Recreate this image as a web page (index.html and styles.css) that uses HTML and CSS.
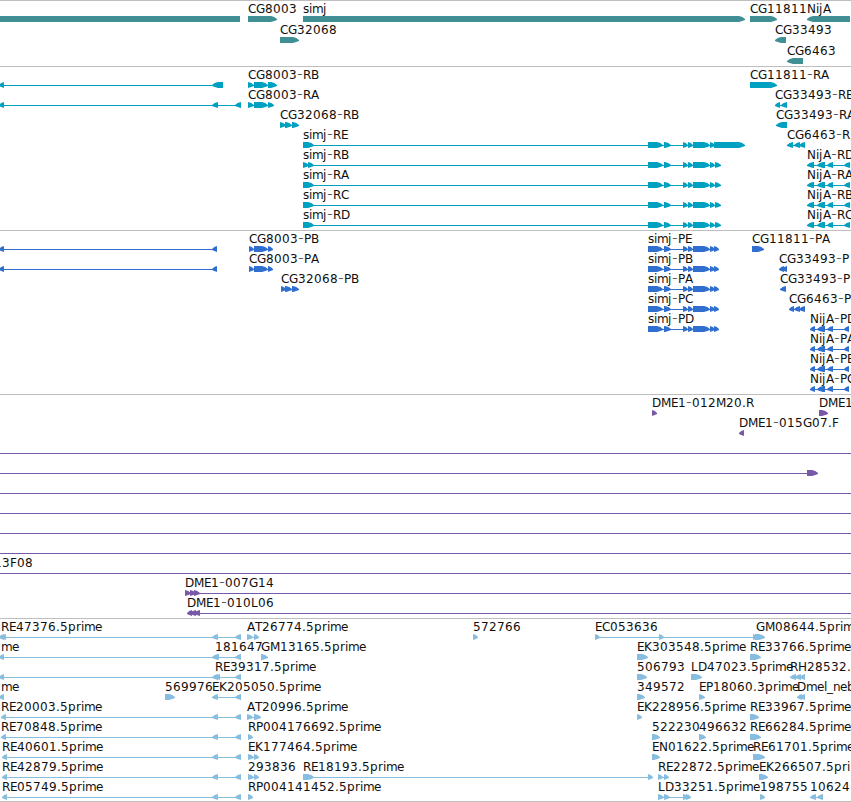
FILE: index.html
```html
<!DOCTYPE html>
<html lang="en">
<head>
  <meta charset="UTF-8">
  <title>Genome Tracks</title>
  <link rel="stylesheet" href="styles.css">
</head>
<body>

<main class="browser">
  <section class="track genes" id="genes"></section>
  <section class="track transcripts" id="transcripts"></section>
  <section class="track proteins" id="proteins"></section>
  <section class="track clones" id="clones"></section>
  <section class="track ests" id="ests"></section>
</main>

<script src="tracks.js"></script>
</body>
</html>
```

FILE: styles.css
```css
body { margin: 0; background-color: #ffffff; overflow: hidden; }
.browser { display: flex; flex-direction: column; width: 851px; height: 802px; overflow: hidden; }
.track { border-top: 1px solid #bebebe; padding-bottom: 3px; }
.row { display: block; width: 851px; height: 20px; overflow: visible; fill: currentColor; }
.row text { font-family: "DejaVu Sans", sans-serif; font-size: 12px; fill: #101010; }
.row .dash { font-family: "DejaVu Sans Light", "DejaVu Sans", sans-serif; font-weight: 200; font-size: 16px; }
.genes { color: #408f95; padding-bottom: 2px; }
.genes .row { height: 21px; }
.transcripts { color: #00a0c0; }
.proteins { color: #306fcf; }
.clones { color: #7858a8; }
.ests { color: #87bddf; border-bottom: 1px solid #bebebe; padding-bottom: 2px; }
```

FILE: tracks.js
```js
// Each feature: [label, label x, direction, exons, line]
// direction: 1 = forward, -1 = reverse, 0 = no arrow
const simjExons = [[648, 663], [664, 671], [683, 688], [688, 693], [693, 710], [710, 715]];
const nijR = [[807, 814], [817, 825], [827, 833], [844, 850]];
const nijP = [[810, 815], [817, 825], [827, 833], [844, 849]];

function simjR(name, first) {
  return ['simj-' + name, 303, 1, first.concat(simjExons, [[715, 721]])];
}
function simjP(name) {
  return ['simj-' + name, 648, 1, simjExons.concat([[714, 719]])];
}
function est(name, x, exons) {
  return [name, x, -1, exons.concat([[235, 241]])];
}

const tracks = {
  genes: [
    [
      ['', 0, 0, [[0, 240]]],
      ['CG8003', 248, 1, [[248, 277]]],
      ['simj', 303, 1, [[303, 745]]],
      ['CG11811', 750, 1, [[750, 777]]],
      ['NijA', 807, -1, [[807, 850]]]
    ],
    [['CG32068', 280, 1, [[280, 299]]], ['CG33493', 775, -1, [[775, 786]]]],
    [['CG6463', 787, -1, [[787, 803]]]]
  ],
  transcripts: [
    [
      ['', 0, -1, [[-1, 4], [212, 223]]],
      ['CG8003-RB', 248, 1, [[248, 254], [254, 268], [268, 277]]],
      ['CG11811-RA', 750, 1, [[750, 777]]]
    ],
    [
      ['', 0, -1, [[-1, 4], [212, 218], [235, 241]]],
      ['CG8003-RA', 248, 1, [[248, 254], [254, 268], [268, 274]]],
      ['CG33493-RB', 775, -1, [[775, 780], [781, 787]]]
    ],
    [
      ['CG32068-RB', 280, 1, [[280, 286], [285, 292], [292, 299]]],
      ['CG33493-RA', 776, -1, [[776, 787]]]
    ],
    [
      ['simj-RE', 303, 1, [[303, 314]].concat(simjExons, [[714, 745]])],
      ['CG6463-R', 787, -1, [[787, 793], [794, 800], [799, 805]]]
    ],
    [simjR('RB', [[303, 309], [308, 314]]), ['NijA-RD', 807, -1, nijR]],
    [simjR('RA', [[303, 314]]), ['NijA-RA', 807, -1, nijR]],
    [simjR('RC', [[303, 314]]), ['NijA-RB', 807, -1, nijR]],
    [simjR('RD', [[303, 314]]), ['NijA-RC', 807, -1, nijR]]
  ],
  proteins: [
    [
      ['', 0, -1, [[-1, 4], [212, 217]]],
      ['CG8003-PB', 249, 1, [[249, 254], [254, 268], [268, 273]]],
      simjP('PE'),
      ['CG11811-PA', 752, 1, [[752, 764]]]
    ],
    [
      ['', 0, -1, [[-1, 4], [212, 217]]],
      ['CG8003-PA', 249, 1, [[249, 254], [254, 268], [268, 273]]],
      simjP('PB'),
      ['CG33493-P', 779, -1, [[779, 784], [782, 787]]]
    ],
    [
      ['CG32068-PB', 281, 1, [[281, 286], [285, 292], [292, 299]]],
      simjP('PA'),
      ['CG33493-P', 780, -1, [[780, 786]]]
    ],
    [simjP('PC'), ['CG6463-P', 789, -1, [[789, 794], [794, 800], [799, 805]]]],
    [simjP('PD'), ['NijA-PD', 810, -1, nijP]],
    [['NijA-PA', 810, -1, nijP]],
    [['NijA-PB', 810, -1, nijP]],
    [['NijA-PC', 810, -1, nijP]]
  ],
  clones: [
    [['DME1-012M20.R', 652, 1, [[652, 657]]], ['DME1', 819, 1, [[819, 828]]]],
    [['DME1-015G07.F', 739, -1, [[739, 744]]]],
    [['', 0, 1, [], [0, 851]]],
    [['', 0, 1, [[807, 818]], [0, 807]]],
    [['', 0, 1, [], [0, 851]]],
    [['', 0, 1, [], [0, 851]]],
    [['', 0, 1, [], [0, 851]]],
    [['', 0, 1, [], [0, 851]]],
    [['13F08', -6, 1, [], [0, 851]]],
    [['DME1-007G14', 185, 1, [[185, 191], [190, 196], [194, 200]], [185, 851]]],
    [['DME1-010L06', 187, -1, [[187, 192], [190, 196], [194, 200]], [187, 851]]]
  ],
  ests: [
    [
      est('RE47376.5prime', 1, [[-1, 4], [1, 6], [212, 218]]),
      ['AT26774.5prime', 247, 1, [[247, 253], [254, 259]]],
      ['572766', 473, 1, [[473, 478]]],
      ['EC053636', 595, 1, [[595, 600], [659, 664], [753, 759], [755, 765]]],
      ['GM08644.5prim', 756, 1, []]
    ],
    [
      est('me', 1, [[-1, 4], [212, 218], [214, 219]]),
      ['181647', 215, 1, []],
      ['GM13165.5prime', 261, 1, [[261, 268]]],
      ['EK303548.5prime', 637, 1, [[637, 648]]],
      ['RE33766.5prime', 750, 1, [[750, 761]]]
    ],
    [
      est('', 0, [[-1, 4], [212, 218], [215, 220]]),
      ['RE39317.5prime', 215, 1, []],
      ['506793', 637, 1, [[637, 647]]],
      ['LD47023.5prime', 691, 1, [[691, 702]]],
      ['RH28532.', 790, -1, [[790, 796], [795, 801], [800, 805]]]
    ],
    [
      ['me', 1, -1, [[-1, 4]]],
      ['569976', 165, 1, [[165, 175]]],
      est('EK205050.5prime', 212, [[212, 218]]),
      ['349572', 637, 1, [[637, 645]]],
      ['EP18060.3prime', 699, 1, [[699, 705]]],
      ['Dmel_neb', 797, -1, [[797, 802], [800, 805]]]
    ],
    [
      est('RE20003.5prime', 1, [[1, 6], [212, 218]]),
      ['AT20996.5prime', 247, 1, [[247, 253], [254, 261]]],
      ['EK228956.5prime', 637, 1, [[637, 642]]],
      ['RE33967.5prime', 750, 1, [[750, 759]]]
    ],
    [
      est('RE70848.5prime', 1, [[1, 6], [212, 218]]),
      ['RP004176692.5prime', 248, 1, [[248, 253]]],
      ['522230', 652, 1, [[652, 660]]],
      ['496632', 699, 1, [[699, 706]]],
      ['RE66284.5prime', 750, 1, [[750, 761]]]
    ],
    [
      est('RE40601.5prime', 2, [[2, 7], [212, 218]]),
      ['EK177464.5prime', 248, 1, [[248, 254], [254, 259]]],
      ['EN01622.5prime', 652, 1, [[652, 660]]],
      ['RE61701.5prime', 753, 1, [[753, 765]]]
    ],
    [
      est('RE42879.5prime', 2, [[2, 7], [212, 218]]),
      ['293836', 248, 1, [[248, 254], [254, 259]]],
      ['RE18193.5prime', 303, 1, [[303, 314], [648, 653]]],
      ['RE22872.5prime', 658, 1, [[658, 663], [664, 669]]],
      ['EK266507.5pri', 759, 1, [[759, 768]]]
    ],
    [
      est('RE05749.5prime', 2, [[2, 7], [212, 218]]),
      ['RP004141452.5prime', 248, 1, [[248, 253]]],
      ['LD33251.5prime', 658, 1, [[658, 664], [664, 670], [683, 689], [686, 691]]],
      ['198755', 760, 1, [[760, 765]]],
      ['10624', 810, -1, [[810, 816], [817, 823]]]
    ]
  ]
};

// whole pixel advance of every character used in labels
const advance = {
  C: 8, G: 9, R: 8, E: 7, A: 8, B: 8, D: 9, F: 7, H: 9, K: 8, L: 7, M: 10, N: 9, P: 7, T: 7,
  '-': 6, '.': 4, _: 6, s: 6, i: 3, m: 11, j: 4, p: 8, r: 5, e: 7, l: 3, n: 7, b: 8
};

function drawLabel(text, x) {
  const xs = [];
  for (const ch of text) {
    xs.push(x);
    x += advance[ch] || 8;
  }
  const chars = text.replace('-', '<tspan class="dash">-</tspan>');
  return `<text x="${xs.join(' ')}" y="12">${chars}</text>`;
}

function drawExon(a, b, dir) {
  if (dir === 0) return `<rect x="${a}" y="15" width="${b - a}" height="6"/>`;
  // bulging head, 6px long at most
  const head = Math.min(6, b - a);
  const tip = dir > 0 ? b : a;
  const back = dir > 0 ? a : b;
  const neck = tip - dir * head;
  const mid = tip - dir * head * 0.45;
  return `<polygon points="${back},15 ${neck},15 ${mid},16 ${tip},18 ${tip},19 ${mid},20 ${neck},21 ${back},21"/>`;
}

function drawFeature([label, x, dir, exons, line]) {
  let out = '';
  if (!line && exons.length > 1) line = [exons[0][0], exons[exons.length - 1][1]];
  if (line) out += `<rect x="${line[0]}" y="18" width="${line[1] - line[0]}" height="1"/>`;
  out += exons.map(([a, b]) => drawExon(a, b, dir)).join('');
  if (label) out += drawLabel(label, x);
  return out;
}

for (const id in tracks) {
  document.getElementById(id).innerHTML = tracks[id]
    .map(row => `<svg class="row">${row.map(drawFeature).join('')}</svg>`)
    .join('');
}
```
